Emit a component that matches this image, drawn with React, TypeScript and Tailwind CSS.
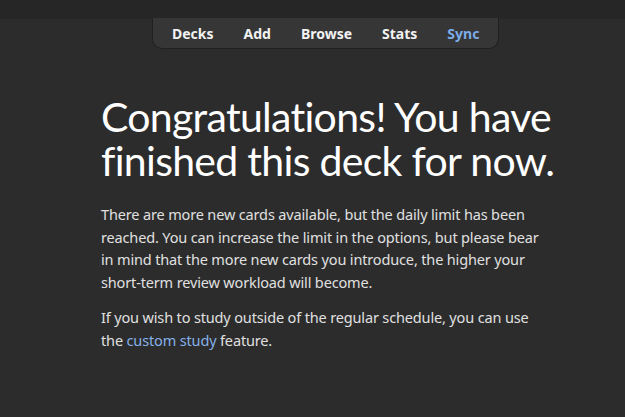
export default function App() {
  const items = ['Decks', 'Add', 'Browse', 'Stats', 'Sync']
  return (
    <div
      className="min-h-[417px] w-full bg-[#2c2c2c] text-[#e6e6e6]"
      style={{ fontFamily: '"Noto Sans", "Open Sans", sans-serif' }}
    >
      <div className="relative h-[19px] bg-[#262626]">
        <div className="absolute left-[152px] top-[18px] z-10 flex h-[31px] items-center gap-[30px] rounded-b-[10px] border border-t-0 border-[#202020] bg-[#363636] px-[19px] text-[14px] font-bold">
          {items.map((it) => (
            <span key={it} className={it === 'Sync' ? 'text-[#7cabe6]' : 'text-[#f2f2f2]'}>
              {it}
            </span>
          ))}
        </div>
      </div>
      <div className="ml-[101px] w-[470px] pt-[76px]">
        <h1
          className="whitespace-nowrap text-[41px] leading-[44px] font-normal text-white tracking-[-0.7px] [font-variant-ligatures:none]"
          style={{ fontFamily: 'Lato, "Noto Sans", sans-serif' }}
        >
          Congratulations! You have
          <br />
          finished this deck for now.
        </h1>
        <p className="mt-[20px] whitespace-nowrap text-[14.5px] leading-[22.6px] text-[#e0e0e0] tracking-[-0.15px]">
          There are more new cards available, but the daily limit has been
          <br />
          reached. You can increase the limit in the options, but please bear
          <br />
          in mind that the more new cards you introduce, the higher your
          <br />
          short-term review workload will become.
        </p>
        <p className="mt-[13px] whitespace-nowrap text-[14.5px] leading-[22.6px] text-[#e0e0e0] tracking-[-0.15px]">
          If you wish to study outside of the regular schedule, you can use
          <br />
          the <a className="text-[#85b1e8]">custom study</a> feature.
        </p>
      </div>
    </div>
  )
}
